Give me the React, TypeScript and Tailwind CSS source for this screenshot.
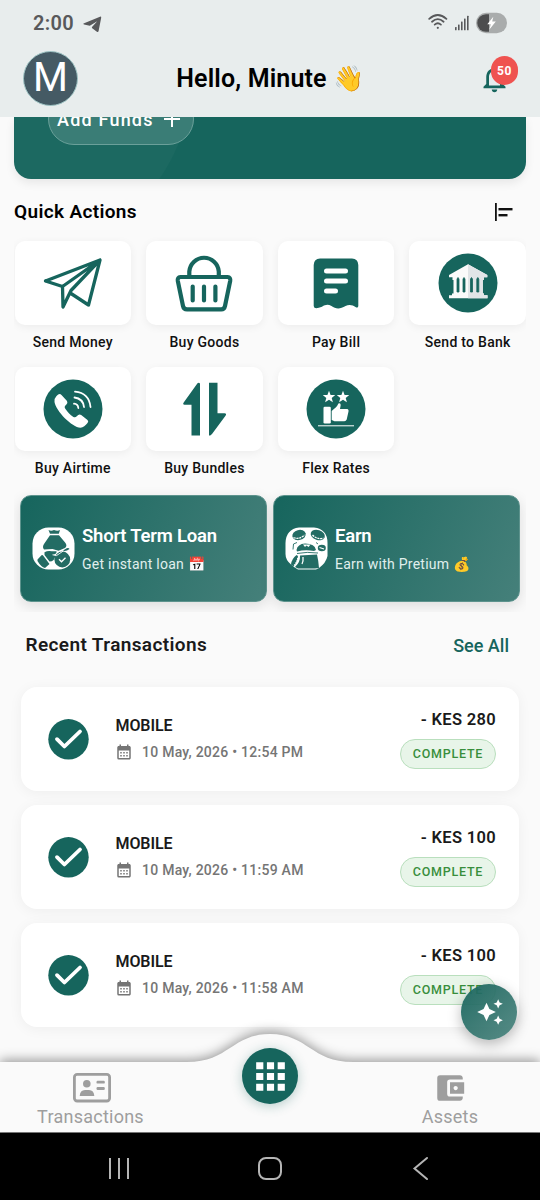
import type { ReactNode } from "react";
import {
  MdAccountBalanceWallet,
  MdApps,
  MdAutoAwesome,
  MdCalendarMonth,
  MdNotificationsNone,
} from "react-icons/md";

const GREEN = "#16655d";

function TelegramIcon() {
  return (
    <svg width="19" height="17" viewBox="0 0 19 17" className="ml-[9px] mt-0.5">
      <path d="M0.5 7.6 L17 0.7 Q18.4 0.3 18.2 1.8 L15.6 15 Q15.2 16.5 13.9 15.7 L9.2 12.3 Q8.4 11.6 9.2 10.8 L14.2 5.2 L6.8 9.8 L1 8.6 Q0 8.2 0.5 7.6Z" fill="#58595b" />
    </svg>
  );
}

function StatusIcons() {
  return (
    <svg width="80" height="22" viewBox="0 0 80 22">
      <g fill="none" stroke="#58595b" strokeWidth="1.8" strokeLinecap="round">
        <path d="M1.2 6.8 Q9.8 -0.8 18.4 6.8" />
        <path d="M4 9.7 Q9.8 4.6 15.6 9.7" />
        <path d="M6.7 12.6 Q9.8 10 12.9 12.6" />
      </g>
      <circle cx="9.8" cy="15.8" r="1.1" fill="#58595b" />
      <g fill="#58595b">
        <rect x="27" y="15" width="1.6" height="3.2" rx="0.5" />
        <rect x="30" y="12.5" width="1.6" height="5.7" rx="0.5" />
        <rect x="33" y="9.5" width="1.6" height="8.7" rx="0.5" />
        <rect x="36" y="6.5" width="1.6" height="11.7" rx="0.5" />
        <rect x="39" y="3.7" width="1.6" height="14.5" rx="0.5" />
      </g>
      <rect x="48" y="0.7" width="31" height="20.5" rx="10.2" fill="#a9acac" />
      <path d="M61 2.2 V19.7 H58 A8.7 8.7 0 0 1 58 2.2Z" fill="#4c4d4e" />
      <path d="M65.3 4.7 L59.3 12.2 H62.8 L61.4 17.6 L67.8 9.6 H64.2Z" fill="#fff" />
    </svg>
  );
}

function SendIcon() {
  return (
    <svg width="60" height="60" viewBox="0 0 60 60" fill="none" stroke={GREEN} strokeWidth="3.3" strokeLinejoin="round" strokeLinecap="round">
      <path d="M2.5 28 L57 7 L45.5 52 L28 40.5 M2.5 28 L19.5 33.5 L57 7 L28 37.5 L20 54 L19.5 33.5" />
    </svg>
  );
}

function BasketIcon() {
  return (
    <svg width="60" height="60" viewBox="0 0 60 60" fill="none" stroke={GREEN} strokeWidth="4.2" strokeLinecap="round" strokeLinejoin="round">
      <path d="M15.3 23 V18.5 A14.8 15 0 0 1 44.8 18.5 V23" />
      <path d="M6.5 24 H53.5 Q56.8 24.3 56.2 27.8 L51 53 Q50.3 56.3 47.3 56.3 H13 Q9.7 56.3 9 53 L3.8 27.8 Q3.2 24.3 6.5 24Z" />
      <path d="M18.7 33.5 V47.5 M30 33.5 V47.5 M41.4 33.5 V47.5" />
    </svg>
  );
}

function BillIcon() {
  return (
    <svg width="60" height="60" viewBox="0 0 60 60">
      <path d="M14 5.5 H46 Q52 5.5 52.3 12 V53 Q52 55.5 49.5 54 C47 52 43 51 39.5 53 C34 56.5 29.5 56 25.5 53 C22 51 19.5 51.5 16 53.7 Q8 57 7.7 53 V12 Q8 5.5 14 5.5Z" fill={GREEN} />
      <path d="M20.5 18 H39.5 M20.5 28 H39.5 M20.5 38 H29.5" stroke="#fff" strokeWidth="5" strokeLinecap="round" />
    </svg>
  );
}

function BankIcon() {
  return (
    <svg width="60" height="60" viewBox="0 0 60 60">
      <circle cx="30" cy="30" r="29.5" fill={GREEN} />
      <path d="M30 11.3 L11 22 V24.2 H14.5 V27 H15.5 V40.5 H14 V42.3 H11 V45.3 H49.5 V42.3 H46 V40.5 H44.8 V27 H46 V24.2 H49.3 V22Z" fill="#fafafa" />
      <path d="M30 11.3 V45.3 H49.5 V42.3 H46 V40.5 H44.8 V27 H46 V24.2 H49.3 V22Z" fill="#e1e5e7" />
      <path d="M19 39 V26 L20 24.5 L21 26 V39Z M25 39 V26 L26 24.5 L27 26 V39Z M32.5 39 V26 L33.5 24.5 L34.5 26 V39Z M38.8 39 V26 L39.8 24.5 L40.8 26 V39Z" fill={GREEN} stroke={GREEN} strokeWidth="0.8" />
    </svg>
  );
}

function PhoneIcon() {
  return (
    <svg width="60" height="60" viewBox="0 0 60 60">
      <circle cx="30" cy="30" r="29.5" fill={GREEN} />
      <path d="M13.5 17 Q16.5 13.5 18.5 16 L24 22 Q25.3 24 23 26 Q20.8 27.5 22.3 29.7 C24.5 33 27 35.5 30.4 38 Q32.5 39 34 37 Q36 34.5 38.2 36 L44.5 41 Q46 42.3 44.5 44 Q41.5 48.2 37.5 48.7 C29 48.5 13 32 11.5 23 Q11 19.5 13.5 17Z" fill="#fff" />
      <g fill="none" stroke="#fff" strokeWidth="1.8" strokeLinecap="round">
        <path d="M32 12.7 Q46 14 47.5 28" />
        <path d="M31.5 18.5 Q40 19.5 41 28" />
        <path d="M31 24.7 Q35 25 35.3 29" />
      </g>
    </svg>
  );
}

function BundlesIcon() {
  return (
    <svg width="60" height="60" viewBox="0 0 60 60" fill={GREEN}>
      <path d="M25.5 4.5 Q26 3 26 5 V56.5 H17.5 V25.7 H10.5 Q8.3 25.5 9.7 23.5 L23.5 4.3 Q24.8 3 25.5 4.5Z" />
      <path d="M35 3.7 H43.5 V34.3 H50.5 Q53 34.7 51.5 36.7 L38 55 Q35 58 35 55.5Z" />
    </svg>
  );
}

function RatesIcon() {
  return (
    <svg width="60" height="60" viewBox="0 0 60 60">
      <circle cx="30" cy="30" r="29.5" fill={GREEN} />
      <g fill="#fff">
        <path d="M23 11.7 L24.6 15.9 L29.2 16.1 L25.7 18.9 L26.9 23.2 L23 20.8 L19.1 23.2 L20.3 18.9 L16.8 16.1 L21.4 15.9Z" />
        <path d="M37 11.7 L38.6 15.9 L43.2 16.1 L39.7 18.9 L40.9 23.2 L37 20.8 L33.1 23.2 L34.3 18.9 L30.8 16.1 L35.4 15.9Z" />
        <rect x="17.5" y="27.8" width="7.3" height="16.7" rx="1.3" />
        <path d="M25.7 32 C29 29 31 28 32.4 24.5 Q34.5 23.3 34.7 26 L34 30 H41.5 Q43 30.5 42.5 32.5 L40.7 40.5 Q40 42.3 38.3 42.3 H28.5 L25.7 41Z" />
        <rect x="12" y="46.3" width="36" height="1" />
      </g>
    </svg>
  );
}

function LoanIcon() {
  return (
    <svg width="43" height="43" viewBox="0 0 43 43">
      <rect x="0.5" y="0.5" width="42" height="42" rx="16" fill="#fff" />
      <g fill="#236c64">
        <path d="M16.5 3 Q19 4.3 22 3 Q25.5 4.3 28 3 L26.8 6.7 H18Z" />
        <path d="M18 8.2 H27 L33.5 16 Q35.5 19 33 21 L26.5 23.8 L20.5 22 L12 22.5 Q10 20 12 17Z" />
        <path d="M12.5 25.2 Q16 23.2 20 24.3 H24.5 Q25 27 21 27.7 L24 28.4 L33 22.2 Q36.5 20 37.5 22 L35 23.6 Q24.5 24.5 21.6 33 Q20 34.5 17.5 34.5 L12.5 28Z" />
        <path d="M5.5 32.5 L9.5 28.3 Q10.5 27.7 11.3 28.8 L17.5 37 L13 41 Q9 40 5.5 34Z" />
        <circle cx="30.3" cy="32.5" r="7.9" />
      </g>
      <path d="M27 32.3 L29.5 34.8 L33.5 30.7" fill="none" stroke="#fff" strokeWidth="1.3" />
      <path d="M20.5 27.8 L24.5 28.6 L31.5 23.8" fill="none" stroke="#fff" strokeWidth="0.9" />
    </svg>
  );
}

function EarnIcon() {
  return (
    <svg width="43" height="43" viewBox="0 0 43 43">
      <path d="M14 0.5 H29 Q42.5 2 42.5 16 V29 Q41 36 34 41 L31 42.5 H13 L9 40 L6 37.5 Q0.5 33 0.5 27 V16 Q1 2 14 0.5Z" fill="#fff" />
      <g fill="#236c64">
        <ellipse cx="14" cy="8" rx="6.8" ry="5" transform="rotate(-15 14 8)" />
        <ellipse cx="32.8" cy="8" rx="7.3" ry="5" transform="rotate(18 32.8 8)" />
        <path d="M11.5 23 Q12.5 17 20 16.5 Q30 16.5 31 23 L29 24 Q20 22.5 12 24.5Z" />
        <path d="M15 28.5 L32 27.5 Q33.5 34 34 41 L30 41.5 H13 L10 40 Q15.5 35 15 28.5Z" />
        <path d="M6 37.5 Q6.5 32 11.5 28 L13 29 Q12 36 8.5 39.5Z" />
        <ellipse cx="36.8" cy="21" rx="4" ry="3.3" />
      </g>
      <g fill="none" stroke="#fff" strokeWidth="1.3">
        <path d="M8.5 10.5 Q14 13 19.5 8" strokeDasharray="2.2 0.7" />
        <path d="M27.5 8 Q32 13 38.5 11" strokeDasharray="2.2 0.7" />
        <path d="M34.5 20.5 L39 22 M18 30 Q18.5 34 17 37" />
        <path d="M12.8 31 Q12 36 8.5 39" strokeDasharray="1.5 0.8" />
      </g>
      <path d="M18 17.5 L20 20 L21.5 18.5 L23.5 20 L25.5 17.5Z" fill="#fff" />
      <path d="M8 22.5 L8.5 17 L12 15.5 M12 26.5 Q22 24.5 33 26 M31 15.5 L33 17" fill="none" stroke="#236c64" strokeWidth="0.9" />
    </svg>
  );
}

function ContactCardIcon() {
  return (
    <svg width="38" height="30" viewBox="0 0 38 30" fill="#9e9e9e">
      <rect x="1.4" y="1.4" width="35.2" height="26.6" rx="2.8" fill="none" stroke="#9e9e9e" strokeWidth="2.8" />
      <circle cx="13.8" cy="10.8" r="3.8" />
      <path d="M6.7 23 Q7 17 12 17 H16 Q21 17 21.3 23Z" />
      <rect x="23.5" y="7.7" width="8.3" height="2.9" rx="1.2" />
      <rect x="23.5" y="14" width="8.3" height="2.9" rx="1.2" />
    </svg>
  );
}

function Action({ icon, label }: { icon: ReactNode; label: string }) {
  return (
    <div className="flex flex-col items-center">
      <div className="flex h-[84px] w-full items-center justify-center rounded-[10px] bg-white shadow-[0_2px_8px_rgba(0,0,0,0.06)]">
        {icon}
      </div>
      <div className="mt-[7px] h-5 whitespace-nowrap text-[14px] font-medium leading-5 tracking-[0.27px] text-[#111]">{label}</div>
    </div>
  );
}

function Promo({ icon, title, text, emoji }: { icon: ReactNode; title: string; text: string; emoji: string }) {
  return (
    <div className="flex h-[107px] flex-1 items-center rounded-[11px] border border-[#5d938d] bg-linear-[113deg,#16655d,#45807a] pl-[11px] shadow-[0_4px_14px_rgba(0,0,0,0.12)]">
      {icon}
      <div className="ml-[7px] mt-px whitespace-nowrap text-white">
        <div className="text-[18.5px] font-semibold leading-6 tracking-[-0.22px]">{title}</div>
        <div className="mt-[5px] flex items-center text-[14px] leading-[22px] tracking-[0.25px] text-[#e0efed]">
          <span>{text}</span>
          <span className="ml-1 text-[14px] tracking-normal">{emoji}</span>
        </div>
      </div>
    </div>
  );
}

function Transaction({ amount, time }: { amount: string; time: string }) {
  return (
    <div className="flex h-[104px] items-center rounded-2xl bg-white pl-[27px] pr-[23px] shadow-[0_2px_14px_rgba(0,0,0,0.05)]">
      <svg width="41" height="41" viewBox="0 0 41 41">
        <circle cx="20.5" cy="20.3" r="20.2" fill={GREEN} />
        <path d="M9 20.2 L16.4 27.5 L32 12.5" fill="none" stroke="#fff" strokeWidth="3.8" strokeLinecap="round" strokeLinejoin="round" />
      </svg>
      <div className="ml-[26px] flex-1 whitespace-nowrap">
        <div className="pl-[0.5px] text-[16px] font-semibold leading-5 tracking-[-0.1px] text-[#1a1a1a]">MOBILE</div>
        <div className="mt-[6px] flex items-center text-[14px] font-medium leading-5 tracking-[0.25px] text-[#757575]">
          <MdCalendarMonth size={18} className="mr-[9px]" />
          {time}
        </div>
      </div>
      <div className="mt-px flex flex-col items-end">
        <div className="text-[16.5px] font-semibold leading-5 tracking-[0.32px] text-[#1a1a1a]">{amount}</div>
        <div className="mt-[9px] flex h-[30px] w-24 items-center justify-center rounded-full border border-[#b9dfbd] bg-[#e8f5e9] text-[12.5px] font-medium tracking-[0.75px] text-[#388e3c]">
          COMPLETE
        </div>
      </div>
    </div>
  );
}

export default function App() {
  return (
    <div className="flex h-[1200px] w-[540px] flex-col overflow-hidden bg-[#fafafa] font-['Roboto',sans-serif]">
      <header className="h-[117px] shrink-0 bg-[#e8eded]">
        <div className="flex h-[46px] items-center justify-between pl-[33px] pr-8">
          <div className="flex items-center text-[20px] font-semibold tracking-[0.3px] text-[#58595b]">
            2:00
            <TelegramIcon />
          </div>
          <StatusIcons />
        </div>
        <div className="grid h-[64px] grid-cols-[1fr_auto_1fr] items-center px-[23px]">
          <div className="flex size-[55px] items-center justify-center rounded-full border border-[#9fc4c4] bg-[#455a64] text-[40px] leading-none text-white">M</div>
          <div className="flex items-center whitespace-nowrap text-[25px] font-semibold tracking-[0.15px] text-black">
            <span className="mt-0.5">Hello, Minute</span>
            <span className="ml-[6px] mt-0.5 text-[25px] tracking-normal">👋</span>
          </div>
          <div className="relative flex w-[38px] justify-start justify-self-end">
            <MdNotificationsNone size={33} color={GREEN} className="-ml-px" />
            <div className="absolute -top-[6px] left-[12px] flex h-[29px] w-[27px] items-center justify-center rounded-full bg-[#ef5350] pt-px text-[12px] font-bold tracking-[0.5px] text-white">50</div>
          </div>
        </div>
      </header>

      <main className="min-h-0 flex-1 overflow-hidden">
        <section className="mx-[14px] h-[62px] overflow-hidden rounded-b-[17px] bg-[#16655d] bg-[radial-gradient(circle_at_-10px_-45px,#1c6961_0,#1c6961_188px,#16655d_189px)] pl-[34px] shadow-[0_4px_10px_rgba(0,0,0,0.08)]">
          <div className="-mt-6 flex h-[52px] w-[146px] items-center rounded-full border border-[#6ba09a] bg-[#3a7d76] pl-2 text-[18px] font-medium tracking-[1.2px] text-white">
            Add Funds
            <svg width="18" height="18" viewBox="0 0 18 18" className="ml-[9px]">
              <path d="M9 1 V17 M1 9 H17" stroke="#fff" strokeWidth="2" />
            </svg>
          </div>
        </section>

        <div className="mt-[20px] flex h-[26px] items-center justify-between pl-[14px] pr-[27px]">
          <h2 className="text-[19px] font-semibold tracking-[0.35px] text-black">Quick Actions</h2>
          <svg width="18" height="18" viewBox="0 0 18 18" fill="#111">
            <rect x="0" y="0" width="1.8" height="18" />
            <rect x="3.5" y="5" width="14" height="2.4" />
            <rect x="3.5" y="11" width="9" height="2.4" />
          </svg>
        </div>

        <section className="mx-[14px] mt-[6px] grid grid-cols-4 gap-x-[15px] gap-y-[15px] overflow-hidden pb-2 pl-[0.5px] pt-[10px]">
          <Action icon={<SendIcon />} label="Send Money" />
          <Action icon={<BasketIcon />} label="Buy Goods" />
          <Action icon={<BillIcon />} label="Pay Bill" />
          <Action icon={<BankIcon />} label="Send to Bank" />
          <Action icon={<PhoneIcon />} label="Buy Airtime" />
          <Action icon={<BundlesIcon />} label="Buy Bundles" />
          <Action icon={<RatesIcon />} label="Flex Rates" />
        </section>

        <section className="mx-[14px] flex gap-[6px] overflow-hidden px-[6px] pb-[10px] pt-[9px]">
          <Promo icon={<LoanIcon />} title="Short Term Loan" text="Get instant loan" emoji="📅" />
          <Promo icon={<EarnIcon />} title="Earn" text="Earn with Pretium" emoji="💰" />
        </section>

        <div className="mt-[20px] flex h-[26px] items-center justify-between pl-[25.5px] pr-[31px]">
          <h2 className="mt-px text-[19px] font-semibold tracking-[0.38px] text-[#1a1a1a]">Recent Transactions</h2>
          <span className="text-[18px] font-medium text-[#16655d]">See All</span>
        </div>

        <section className="mx-[21px] mt-[29px] flex flex-col gap-[14px]">
          <Transaction amount="- KES 280" time="10 May, 2026 • 12:54 PM" />
          <Transaction amount="- KES 100" time="10 May, 2026 • 11:59 AM" />
          <Transaction amount="- KES 100" time="10 May, 2026 • 11:58 AM" />
        </section>
      </main>

      <nav className="relative h-[71px] shrink-0 border-b border-[#888]">
        <svg width="540" height="98" viewBox="0 0 540 98" className="absolute bottom-0 left-0 drop-shadow-[0_-2px_6px_rgba(0,0,0,0.4)]">
          <path d="M0 28 H187 C229 28 232 0 270 0 S311 28 353 28 H540 V98 H0Z" fill="#fafafa" />
        </svg>
        <div className="relative flex h-full justify-between pl-[38px] pr-[60px] text-[18px] tracking-[0.25px] text-[#9e9e9e]">
          <div className="flex w-[107px] flex-col items-center pt-[11px]">
            <ContactCardIcon />
            <span className="mt-[2px] -translate-x-px leading-6">Transactions</span>
          </div>
          <div className="flex w-[60px] flex-col items-center pt-[9px]">
            <MdAccountBalanceWallet size={34} />
            <span className="leading-6">Assets</span>
          </div>
        </div>
        <button className="absolute -top-[14px] left-[242px] flex size-14 items-center justify-center rounded-full bg-[#16655d] text-white shadow-[0_2px_12px_rgba(22,101,93,0.3)]">
          <MdApps size={43} />
        </button>
        <button className="absolute -top-[78px] left-[461px] flex size-14 items-center justify-center rounded-full bg-linear-to-br from-[#16655d]/95 to-[#45807a]/90 text-white shadow-[0_4px_14px_rgba(0,0,0,0.28)]">
          <MdAutoAwesome size={28} className="ml-px" />
        </button>
      </nav>

      <footer className="flex h-[67px] shrink-0 items-center justify-center bg-black pr-0.5 pt-0.5">
        <svg width="326" height="30" viewBox="0 0 326 30" fill="none" stroke="#b5b5b5" strokeWidth="2">
          <path d="M4 5 V26 M13 5 V26 M22 5 V26" />
          <rect x="153" y="5" width="22" height="21" rx="7" />
          <path d="M321 5 L308.5 15.5 L321 26" strokeLinecap="round" />
        </svg>
      </footer>
    </div>
  );
}
